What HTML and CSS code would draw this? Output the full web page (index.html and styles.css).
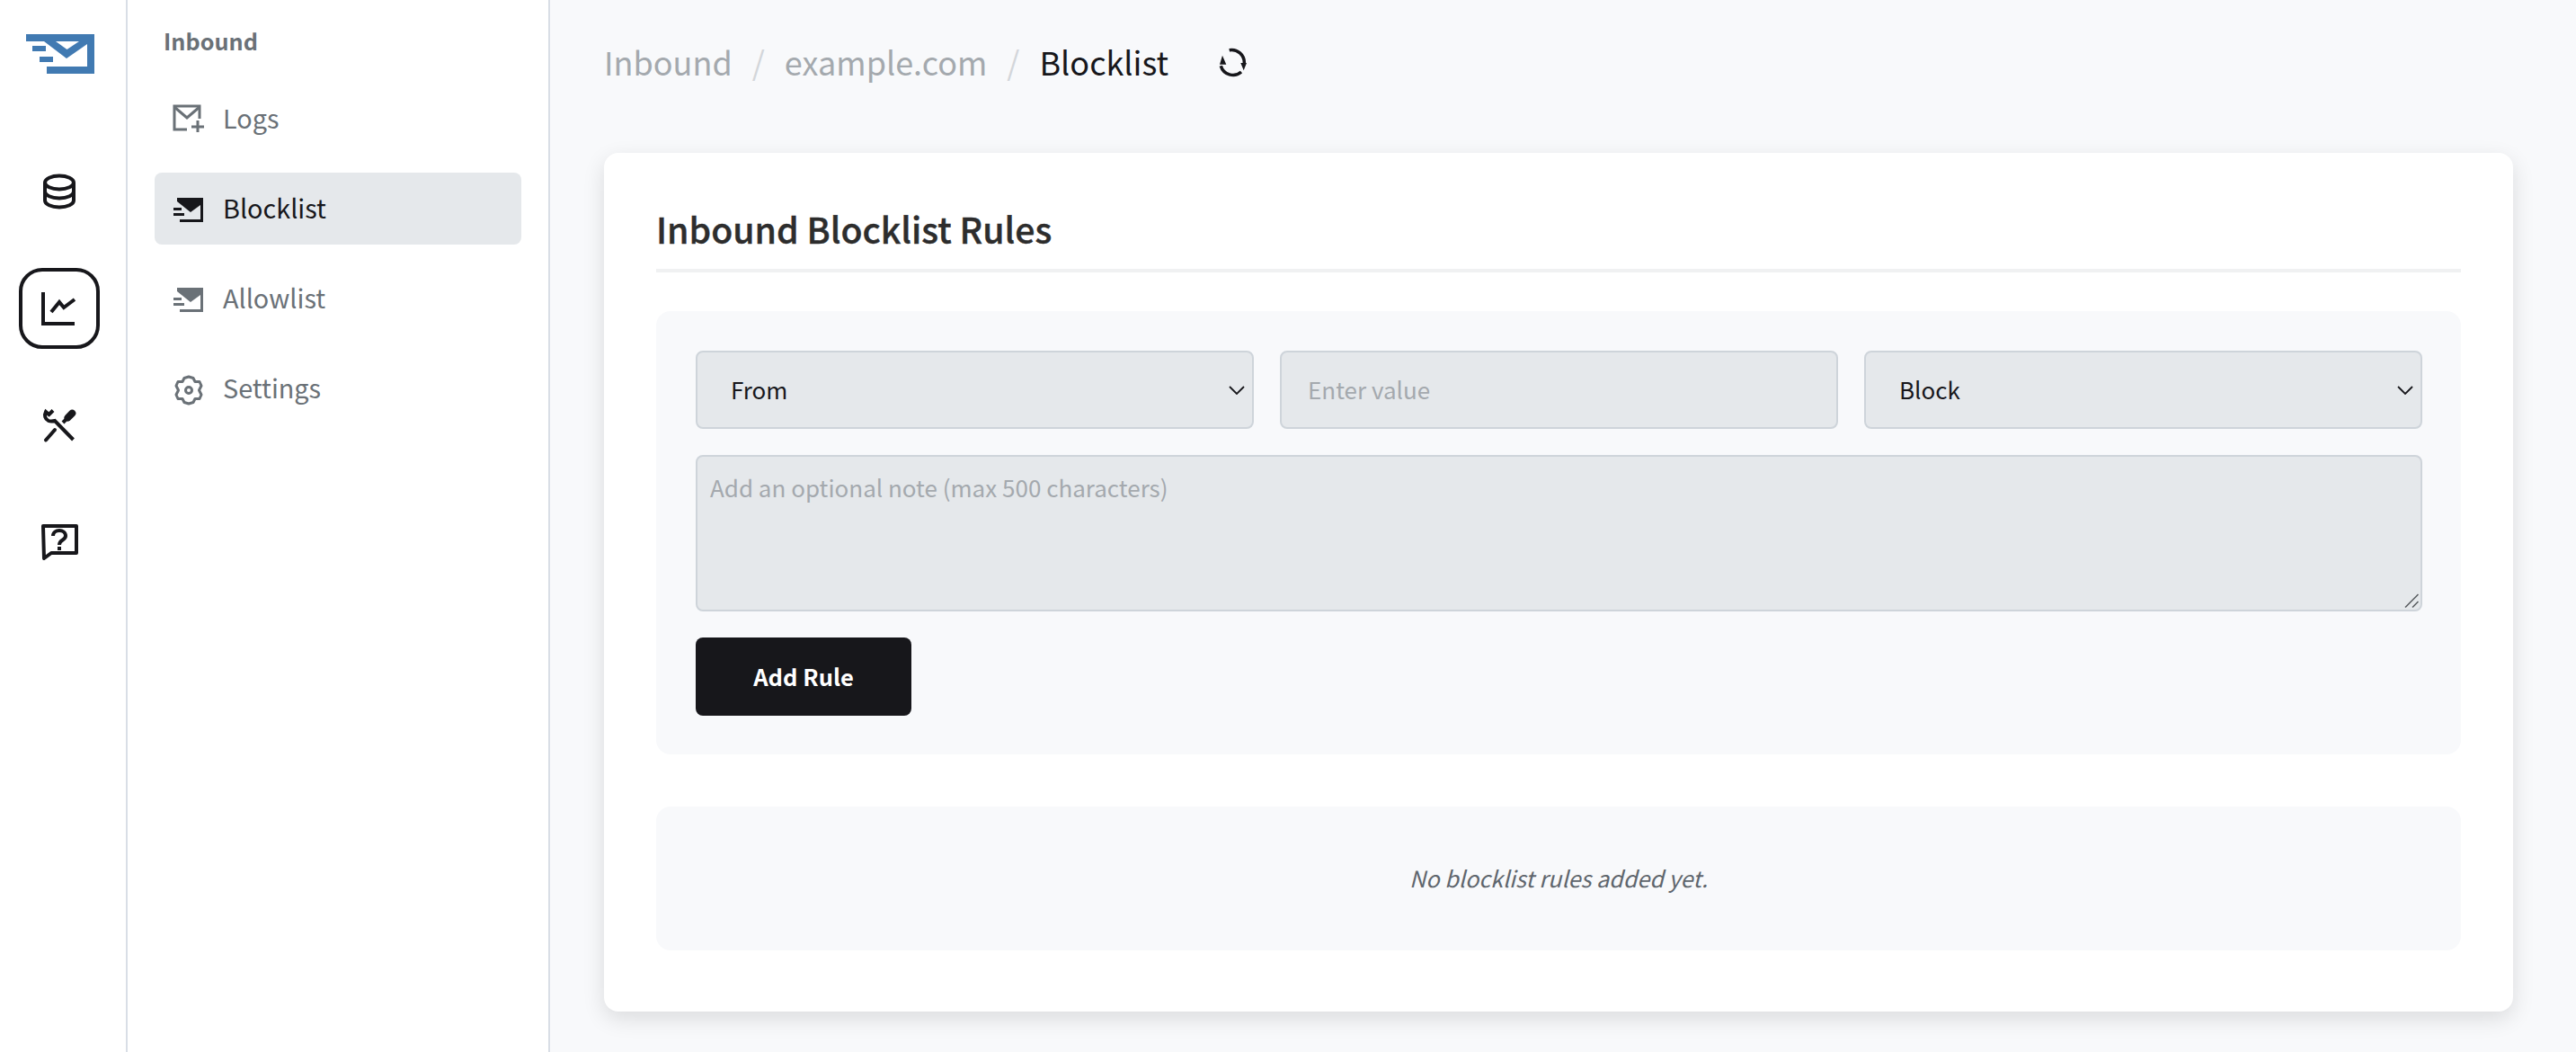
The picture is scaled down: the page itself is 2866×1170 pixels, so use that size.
FILE: index.html
```html
<!DOCTYPE html>
<html lang="en">
<head>
<meta charset="utf-8">
<title>Inbound Blocklist</title>
<link rel="stylesheet" href="styles.css">
</head>
<body>
<aside class="rail">
  <svg class="logo" width="76" height="44" viewBox="0 0 76 44">
    <path fill="#417ab2" d="M0 0H76V44H23V36H68V11L45 27 20 8H0Z"/>
    <path fill="#fff" d="M33 8H59L45.500 17Z"/>
    <path fill="#417ab2" d="M7 13H22V19H7ZM15 25H30V31H15Z"/>
  </svg>
  <a class="rail-item">
    <svg width="40" height="40" viewBox="0 0 40 40" class="ico"><ellipse cx="20" cy="10" rx="16" ry="7.500"/><path d="M4 10V30C4 34 11 37.500 20 37.500S36 34 36 30V10M4 20C4 24 11 27.500 20 27.500S36 24 36 20"/></svg>
  </a>
  <a class="rail-item rail-item-active">
    <svg width="40" height="40" viewBox="0 0 40 40" class="ico"><path d="M2 2V37H37"/><path d="M11 24L20 13 25 19 37 10"/></svg>
  </a>
  <a class="rail-item">
    <svg width="40" height="40" viewBox="0 0 40 40" class="ico"><path d="M13 3.500L8.500 8 5 5C3 9 4 13 8 15 10.500 16 13 15.500 15 15L35.500 36"/><path d="M5 36.500L15 25" stroke-linecap="round"/><path d="M24 17L30 11"/><path d="M29.500 11.500L34.300 6.700" stroke-width="8" stroke-linecap="round"/></svg>
  </a>
  <a class="rail-item">
    <svg width="44" height="44" viewBox="0 0 44 44" class="ico"><path d="M4 4H41V34H13L5 40Z" stroke-linejoin="round"/><path d="M15 15C15 7 29 7 29 15 29 20 22 19 22 25"/><path d="M22 27V31"/></svg>
  </a>
</aside>

<nav class="side">
  <h2 class="side-title">Inbound</h2>
  <a class="side-item">
    <svg class="side-ico" width="36" height="36" viewBox="0 0 36 36"><path d="M16 28H2V2H30V16" fill="none" stroke="currentColor" stroke-width="3"/><path d="M2 3L16 15 30 3" fill="none" stroke="currentColor" stroke-width="3"/><path d="M28 18V31M21 25H35" fill="none" stroke="currentColor" stroke-width="3"/></svg>
    <span>Logs</span>
  </a>
  <a class="side-item side-item-active">
    <svg class="side-ico" width="36" height="36" viewBox="0 0 36 36"><path fill="currentColor" d="M5 4H34V31H8V28H31V12L20 20 5 8Z"/><path fill="currentColor" d="M1 15H10V18H1ZM1 21H13V24H1Z"/></svg>
    <span>Blocklist</span>
  </a>
  <a class="side-item">
    <svg class="side-ico" width="36" height="36" viewBox="0 0 36 36"><path fill="currentColor" d="M5 4H34V31H8V28H31V12L20 20 5 8Z"/><path fill="currentColor" d="M1 15H10V18H1ZM1 21H13V24H1Z"/></svg>
    <span>Allowlist</span>
  </a>
  <a class="side-item">
    <svg class="side-ico" width="36" height="36" viewBox="0 0 36 36"><path fill="none" stroke="currentColor" stroke-width="3" stroke-linejoin="round" d="M13 4.500L18 3 23 4.500 25 8.500 30 8.500 32 13 29.500 18 32 23 30 27.500 25 27.500 23 31.500 18 33 13 31.500 11 27.500 6 27.500 4 23 6.500 18 4 13 6 8.500 11 8.500Z"/><circle cx="18" cy="18" r="3.500" fill="none" stroke="currentColor" stroke-width="3"/></svg>
    <span>Settings</span>
  </a>
</nav>

<main class="main">
  <header class="crumbs">
    <span class="crumb">Inbound</span>
    <span class="crumb-sep">/</span>
    <span class="crumb">example.com</span>
    <span class="crumb-sep">/</span>
    <span class="crumb crumb-current">Blocklist</span>
    <svg class="refresh" width="34" height="34" viewBox="0 0 34 34"><path d="M13.700 2.700A14 14 0 0 1 30.300 17M27 27A14 14 0 0 1 4.300 20.300" fill="none" stroke="#17171b" stroke-width="3.500"/><path d="M26.300 17H33L29.700 25.300ZM3 18.700H10.300L6 8.700Z" fill="#17171b"/></svg>
  </header>

  <section class="card">
    <h1 class="card-title">Inbound Blocklist Rules</h1>
    <form class="panel form">
      <select class="field select"><option>From</option></select>
      <input class="field input" type="text" placeholder="Enter value">
      <select class="field select"><option>Block</option></select>
      <div class="note-wrap">
        <textarea class="field note" placeholder="Add an optional note (max 500 characters)"></textarea>
        <svg class="grip" width="16" height="16" viewBox="0 0 16 16"><path d="M1 15.500L15.500 1M9 15.500L15.500 9" fill="none" stroke="#55595d" stroke-width="1.500"/></svg>
      </div>
      <button class="add" type="button">Add Rule</button>
    </form>
    <div class="panel empty">No blocklist rules added yet.</div>
  </section>
</main>
</body>
</html>
```

FILE: styles.css
```css
* { box-sizing: border-box; }
html, body { height: 100%; }
body {
  margin: 0;
  display: flex;
  height: 1170px;
  overflow: hidden;
  background: #f8f9fb;
  font-family: "Noto Sans CJK SC", "Noto Sans", sans-serif;
  color: #17171b;
}
.rail {
  width: 142px;
  flex: none;
  background: #fff;
  border-right: 2px solid #d9dee6;
  display: flex;
  flex-direction: column;
  align-items: center;
  padding: 38px 8px 0 0;
  gap: 40px;
}
.logo { margin: 0 0 46px 2px; }
.rail-item {
  width: 90px;
  height: 90px;
  flex: none;
  display: flex;
  align-items: center;
  justify-content: center;
  border: 4px solid transparent;
  border-radius: 26px;
}
.rail-item-active { border-color: #17171b; }
.ico { fill: none; stroke: #17171b; stroke-width: 4; }

.side {
  width: 470px;
  flex: none;
  background: #fff;
  border-right: 2px solid #d9dee6;
  padding: 0 30px;
  display: flex;
  flex-direction: column;
  gap: 20px;
}
.side-title {
  margin: 0 0 0 10px;
  height: 72px;
  line-height: 90px;
  font-size: 25.200px;
  font-weight: 700;
  color: #6a7177;
}
.side-item {
  height: 80px;
  padding: 0 0 3px 20px;
  border-radius: 8px;
  display: flex;
  align-items: center;
  gap: 20px;
  font-size: 28.800px;
  color: #6a7177;
}
.side-item-active { background: #e5e8eb; color: #17171b; }
.side-ico { flex: none; margin-top: 7px; }

.main { flex: 1; padding: 0 70px 0 60px; min-width: 0; }
.crumbs {
  height: 170px;
  padding-bottom: 34px;
  display: flex;
  align-items: center;
  font-size: 36px;
}
.crumb { color: #a4a9ae; }
.crumb-current { color: #17171b; }
.crumb-sep { color: #d3d6da; margin: 0 22px; }
.refresh { margin: 4px 0 0 54px; }

.card {
  height: 955px;
  background: #fff;
  border-radius: 16px;
  padding: 0 58px;
  box-shadow: 0 8px 24px rgba(0, 0, 0, .12);
}
.card-title {
  margin: 0 0 43px;
  height: 133px;
  line-height: 60px;
  padding-top: 54px;
  border-bottom: 4px solid #f0f1f2;
  font-size: 39.200px;
  font-weight: 500;
  -webkit-text-stroke: .4px #2d2d2d;
  color: #2d2d2d;
}
.panel { background: #f8f9fb; border-radius: 16px; }
.form {
  padding: 44px 43px 43px 44px;
  display: grid;
  grid-template-columns: repeat(3, 1fr);
  gap: 29px;
  margin-bottom: 58px;
}
.field {
  height: 87px;
  width: 100%;
  border: 2px solid #ced4da;
  border-radius: 8px;
  background-color: #e5e8eb;
  font: inherit;
  font-size: 26px;
  color: #17171b;
  outline: none;
}
.field::placeholder { color: #a4a9ae; opacity: 1; }
.select {
  appearance: none;
  padding: 0 0 2px 37px;
  background-image: url("data:image/svg+xml,%3Csvg xmlns='http://www.w3.org/2000/svg' width='18' height='10' viewBox='0 0 18 10'%3E%3Cpath d='M1 1l8 8 8-8' fill='none' stroke='%2317171b' stroke-width='1.800'/%3E%3C/svg%3E");
  background-repeat: no-repeat;
  background-position: right 8px center;
}
.input { padding: 0 29px 2px; }
.note-wrap {
  grid-column: 1 / -1;
  position: relative;
}
.note {
  height: 174px;
  padding: 15px 14px;
  resize: none;
  display: block;
}
.grip {
  position: absolute;
  right: 4px;
  bottom: 4px;
}
.add {
  justify-self: start;
  width: 240px;
  height: 87px;
  padding: 0 0 2px;
  border: 0;
  border-radius: 8px;
  background: #17171b;
  color: #fff;
  font: inherit;
  font-size: 25.500px;
  font-weight: 700;
}
.empty {
  height: 160px;
  padding-bottom: 2px;
  display: flex;
  align-items: center;
  justify-content: center;
  font-size: 25.200px;
  font-style: italic;
  color: #5f666d;
}
```
